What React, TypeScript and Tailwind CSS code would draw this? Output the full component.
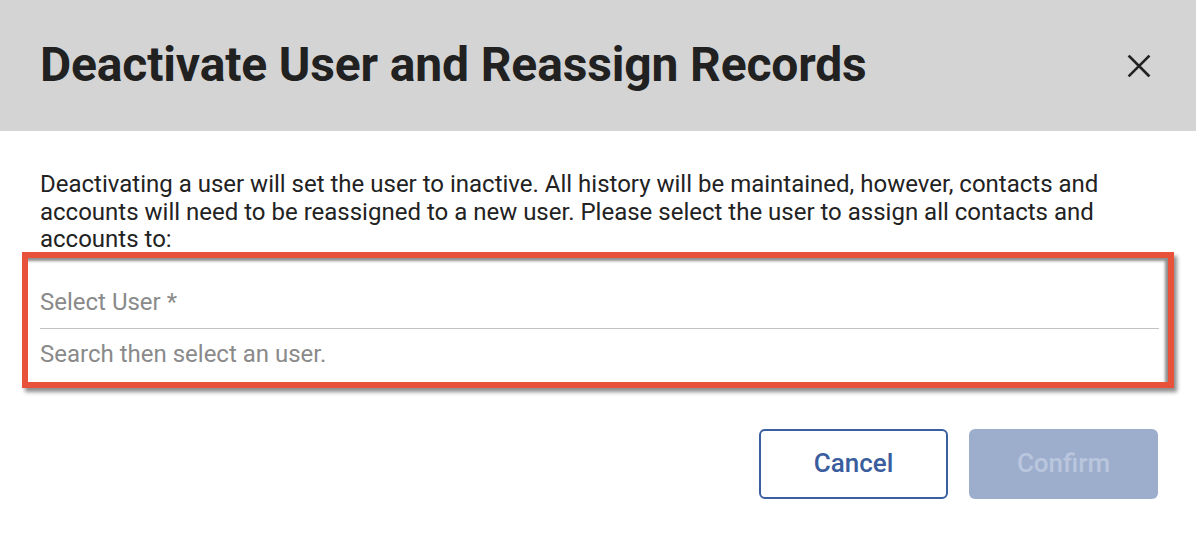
import React from "react";

export default function App() {
  return (
    <div className="w-[1196px] h-[540px] bg-white overflow-hidden" style={{ fontFamily: "Roboto, 'Noto Sans', sans-serif" }}>
      <div className="h-[131px] bg-[#d4d4d4] flex items-center justify-between pl-10 pr-[45px]">
        <h1 className="text-[48px] font-bold text-[#212121] leading-none tracking-[-0.15px] mt-[-2px]">Deactivate User and Reassign Records</h1>
        <button className="w-6 h-6 flex items-center justify-center text-[#222]">
          <svg width="24" height="24" viewBox="0 0 24 24" fill="none" stroke="currentColor" strokeWidth="2.6" strokeLinecap="square">
            <path d="M2.5 2.5L21.5 21.5M21.5 2.5L2.5 21.5" />
          </svg>
        </button>
      </div>
      <div className="pl-10 pr-[37px] pt-10">
        <p className="text-[24px] leading-[27.5px] text-[#222]">
          Deactivating a user will set the user to inactive. All history will be maintained, however, contacts and accounts will need to be reassigned to a new user. Please select the user to assign all contacts and accounts to:
        </p>
        <div className="ml-[-18px] mr-[-15px] mt-[-2px] border-[6px] border-[#e8513a] pl-3 pr-[9px] pt-8 pb-4 shadow-[3px_4px_4px_rgba(0,0,0,0.45),inset_-3px_3px_3px_rgba(0,0,0,0.45)]">
          <div className="text-[24px] leading-6 text-[#8a8a8a]">Select User *</div>
          <div className="mt-[14px] h-px bg-[#c2c2c2]" />
          <div className="mt-[13px] text-[24px] leading-6 text-[#8a8a8a]">Search then select an user.</div>
        </div>
        <div className="flex justify-end gap-[21px] mt-[41px] pr-px">
          <button className="w-[189px] h-[70px] rounded-[6px] border-2 border-[#3b5ea1] bg-white text-[#3a5d9e] text-[26px] font-medium">Cancel</button>
          <button className="w-[189px] h-[70px] rounded-[6px] bg-[#9daecd] text-[#bac6dd] text-[26px] font-medium">Confirm</button>
        </div>
      </div>
    </div>
  );
}
